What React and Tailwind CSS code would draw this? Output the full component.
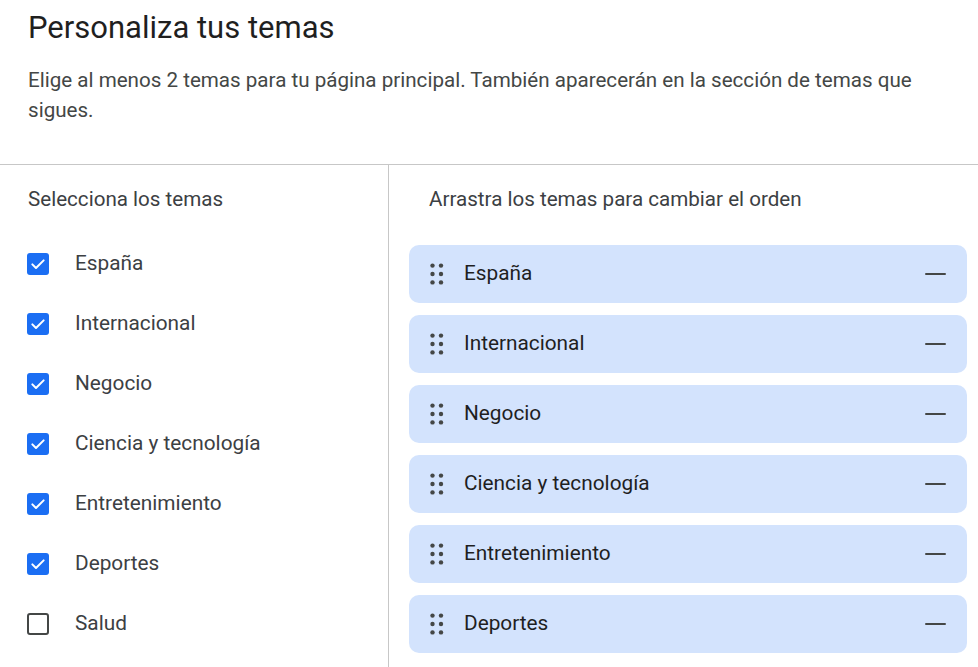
import React from "react";

const left = [
  { label: "España", checked: true },
  { label: "Internacional", checked: true },
  { label: "Negocio", checked: true },
  { label: "Ciencia y tecnología", checked: true },
  { label: "Entretenimiento", checked: true },
  { label: "Deportes", checked: true },
  { label: "Salud", checked: false },
];

const right = ["España", "Internacional", "Negocio", "Ciencia y tecnología", "Entretenimiento", "Deportes"];

function Check({ checked }) {
  if (checked) {
    return (
      <div className="w-[22px] h-[22px] rounded-[3px] bg-[#1b6ef3] flex items-center justify-center">
        <svg width="16" height="16" viewBox="0 0 24 24" fill="none">
          <path d="M3.5 12.5l5.5 5.5L20.5 6.5" stroke="white" strokeWidth="3" strokeLinecap="round" strokeLinejoin="round" />
        </svg>
      </div>
    );
  }
  return <div className="w-[22px] h-[22px] rounded-[3px] border-2 border-[#444746]" />;
}

function Drag() {
  return (
    <svg width="14" height="22" viewBox="0 0 14 22" fill="#444746">
      <circle cx="2.5" cy="2.6" r="2.2" />
      <circle cx="11" cy="2.6" r="2.2" />
      <circle cx="2.5" cy="11" r="2.2" />
      <circle cx="11" cy="11" r="2.2" />
      <circle cx="2.5" cy="19.4" r="2.2" />
      <circle cx="11" cy="19.4" r="2.2" />
    </svg>
  );
}

export default function App() {
  return (
    <div className="w-[978px] h-[667px] overflow-hidden bg-white flex flex-col font-['Roboto',sans-serif]">
      <div className="pl-[28px] pr-[40px] pt-[10px] pb-[39px] border-b border-[#c7c7c7]">
        <h1 className="text-[31px] leading-[36px] text-[#1f1f1f]">Personaliza tus temas</h1>
        <p className="mt-[19px] text-[20.6px] leading-[30px] text-[#444746]">
          Elige al menos 2 temas para tu página principal. También aparecerán en la sección de temas que sigues.
        </p>
      </div>
      <div className="flex flex-1">
        <div className="w-[389px] shrink-0 border-r border-[#c7c7c7] pt-[22px]">
          <div className="pl-[28px] text-[20.6px] leading-[24px] text-[#3c4043]">Selecciona los temas</div>
          <div className="mt-[23px] flex flex-col">
            {left.map((it) => (
              <div key={it.label} className="h-[60px] flex items-center pl-[27px]">
                <Check checked={it.checked} />
                <span className="ml-[26px] text-[20.8px] text-[#3c4043]">{it.label}</span>
              </div>
            ))}
          </div>
        </div>
        <div className="flex-1 pt-[22px] pl-[20px] pr-[11px]">
          <div className="pl-[20px] text-[20.6px] leading-[24px] text-[#3c4043]">Arrastra los temas para cambiar el orden</div>
          <div className="mt-[34px] flex flex-col gap-[12px]">
            {right.map((t) => (
              <div key={t} className="h-[58px] rounded-[10px] bg-[#d3e3fd] flex items-center pl-[21px] pr-[21px]">
                <Drag />
                <span className="ml-[20px] text-[20.8px] text-[#1f1f1f] flex-1">{t}</span>
                <div className="w-[21px] h-[2.5px] bg-[#444746] rounded-full" />
              </div>
            ))}
          </div>
        </div>
      </div>
    </div>
  );
}
